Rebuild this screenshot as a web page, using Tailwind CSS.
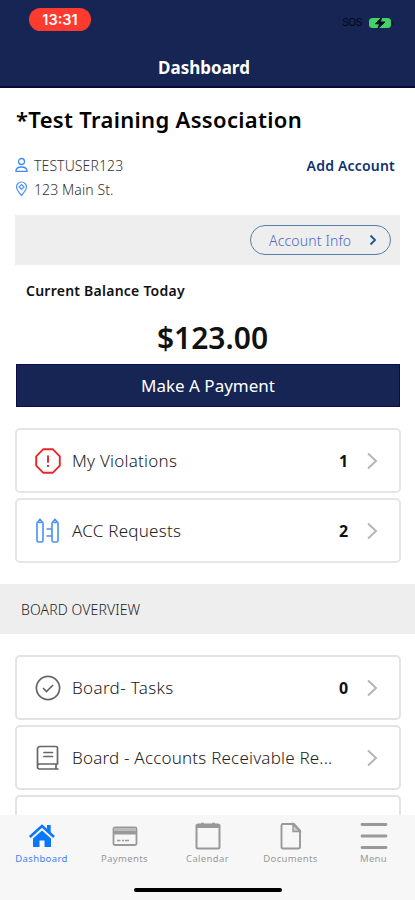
<!DOCTYPE html>
<html lang="en">
<head>
<meta charset="utf-8">
<meta name="viewport" content="width=device-width, initial-scale=1">
<title>Dashboard</title>
<script src="https://cdn.jsdelivr.net/npm/@tailwindcss/browser@4"></script>
</head>
<body class="bg-white">
<div class="relative flex h-[900px] w-[415px] flex-col overflow-hidden bg-white font-['Noto_Sans','Open_Sans',sans-serif] text-[#111]">
  <header class="flex h-[88px] shrink-0 flex-col border-b-2 border-[#07083f] bg-[#172554]">
    <div class="flex h-[45px] items-start justify-between pt-2 pr-[21px] pl-[29px]">
      <span class="flex h-[23px] w-[62px] items-center justify-center rounded-full bg-[#ff3b30] font-[Inter,sans-serif] text-[14.5px] font-semibold text-white">13:31</span>
      <div class="flex items-center gap-[6px] pt-[7px]">
        <span class="font-[Inter,sans-serif] text-[10.5px] leading-4 font-medium tracking-[-0.6px] text-[#060a20]">SOS</span>
        <svg width="26" height="12" viewBox="0 0 26 12"><rect x="1" y="1" width="22" height="10" rx="3.5" fill="#45d166"/><path d="M24 4v4c2-.5 2-3.500 0-4" fill="#0a1432"/><path d="M13.500 .5 7.500 6.800h4l-1.500 4.700 7-6.500h-4.500z" fill="#08102c" stroke="#08102c"/></svg>
      </div>
    </div>
    <h1 class="mt-[11px] text-center text-[17px] leading-6 font-bold text-white"><span class="mr-[7px]">Dashboard</span></h1>
  </header>

  <section class="flex flex-col px-[15px]">
    <h2 class="mt-[16px] pl-px whitespace-nowrap text-[22px] leading-[30px] font-semibold tracking-[0.32px] text-black">*Test Training Association</h2>
    <div class="mt-[19px] flex h-6 items-center justify-between pr-[5px]">
      <div class="flex items-center gap-[6px]">
        <svg width="13" height="16" viewBox="0 0 13 16" fill="none" stroke="#3f8cf5" stroke-width="1.300"><circle cx="6.500" cy="4.500" r="3"/><path d="M.9 14.300c0-3 2.200-4.300 5.600-4.300s5.600 1.300 5.600 4.300z"/></svg>
        <span class="text-[14px] font-light tracking-[0.1px] text-[#333]">TESTUSER123</span>
      </div>
      <a class="text-[14px] font-semibold tracking-[0.2px] text-[#0d3270]">Add Account</a>
    </div>
    <div class="flex h-6 items-center gap-[6px]">
      <svg width="13" height="16" viewBox="0 0 13 16" fill="none" stroke="#4e94f0" stroke-width="1.200"><path d="M6.500 14.500C3.500 11 1.500 8.500 1.500 6a5 5 0 0 1 10 0c0 2.500-2 5-5 8.500z"/><path d="m6.500 3.500 2.500 2.500-2.500 2.500L4 6z"/></svg>
      <span class="text-[14px] font-light tracking-[0.1px] text-[#333]">123 Main St.</span>
    </div>
    <div class="mt-[14px] flex h-[50px] items-center justify-end bg-[#eee] pr-[9px]">
      <button class="flex h-[30px] w-[141px] items-center justify-between rounded-full border border-[#5580aa] pr-[13px] pl-[18px] text-[14px] font-light tracking-[0.15px] text-[#4a6abf]">Account Info
        <svg width="8" height="12" viewBox="0 0 8 12" fill="none" stroke="#23598e" stroke-width="1.900"><path d="m1.500 1.500 4.500 4.500-4.500 4.500"/></svg>
      </button>
    </div>
    <h3 class="mt-4 pl-[11px] text-[14px] leading-5 font-semibold tracking-[0.24px]">Current Balance Today</h3>
    <p class="mt-[17px] pl-[10px] text-center text-[30px] leading-10 font-semibold">$123.00</p>
    <button class="mt-[6px] ml-px h-[43px] w-[384px] border border-[#0b0d4b] bg-[#172554] text-[17px] text-white">Make A Payment</button>
  </section>

  <section class="mt-[21px] flex flex-col gap-[5px] px-[15px]">
    <a class="flex h-[65px] w-[386px] items-center rounded-[5px] border-2 border-[#e6e6e6] pr-[21px] pl-[18px]">
      <svg class="mr-[11px]" width="26" height="26" viewBox="0 0 26 26" fill="none" stroke="#ee2428" stroke-width="1.900"><path d="M8.300 1.200h9.400l7.100 7.100v9.400l-7.100 7.100H8.300l-7.100-7.100V8.300z"/><path d="M13 7.500v7.200M13 17v2"/></svg>
      <span class="text-[17px] font-light tracking-[0.24px] text-[#222]">My Violations</span>
      <span class="ml-auto w-[11px] text-center text-[16px] font-bold">1</span>
      <svg class="ml-[17px]" width="12" height="18" viewBox="0 0 12 18" fill="none" stroke="#b5b5b5" stroke-width="2"><path d="m2 1.500 8 7.500-8 7.500"/></svg>
    </a>
    <a class="flex h-[65px] w-[386px] items-center rounded-[5px] border-2 border-[#e6e6e6] pt-px pr-[21px] pl-[18px]">
      <svg class="mr-[11px]" width="26" height="26" viewBox="0 0 26 26" fill="none" stroke="#4a90f4" stroke-width="1.600" stroke-linejoin="round"><path d="M2 22.500V5L5 1.300 8 5v17.500a1.500 1.500 0 0 1-1.500 1.500h-3A1.500 1.500 0 0 1 2 22.500zM17 22.500V5l3-3.700L23 5v17.500a1.500 1.500 0 0 1-1.500 1.500h-3a1.500 1.500 0 0 1-1.500-1.500zM3.500 4.500h3M18.500 4.500h3M11.500 11H17M11.500 18H17"/></svg>
      <span class="text-[17px] font-light tracking-[0.24px] text-[#222]">ACC Requests</span>
      <span class="ml-auto w-[11px] text-center text-[16px] font-bold">2</span>
      <svg class="ml-[17px]" width="12" height="18" viewBox="0 0 12 18" fill="none" stroke="#b5b5b5" stroke-width="2"><path d="m2 1.500 8 7.500-8 7.500"/></svg>
    </a>
  </section>

  <h3 class="mt-[21px] flex h-[50px] shrink-0 items-center bg-[#eee] pl-[21px] text-[14px] font-light tracking-[0.12px] text-[#222]">BOARD OVERVIEW</h3>

  <section class="mt-[21px] flex flex-col gap-[5px] px-[15px]">
    <a class="flex h-[65px] w-[386px] items-center rounded-[5px] border-2 border-[#e3e3e3] pr-[21px] pl-[18px]">
      <svg class="mr-[11px]" width="26" height="26" viewBox="0 0 26 26" fill="none" stroke="#666" stroke-width="1.700"><circle cx="13" cy="13" r="11.600"/><path d="m8 13 3.500 3.500 6.500-6.500"/></svg>
      <span class="text-[17px] font-light tracking-[0.34px] text-[#222]">Board- Tasks</span>
      <span class="ml-auto w-[11px] text-center text-[16px] font-bold">0</span>
      <svg class="ml-[17px]" width="12" height="18" viewBox="0 0 12 18" fill="none" stroke="#b5b5b5" stroke-width="2"><path d="m2 1.500 8 7.500-8 7.500"/></svg>
    </a>
    <a class="flex h-[65px] w-[386px] items-center rounded-[5px] border-2 border-[#e3e3e3] pr-[21px] pl-[18px]">
      <svg class="mr-[11px]" width="26" height="26" viewBox="0 0 26 26" fill="none" stroke="#666" stroke-width="1.700" stroke-linecap="round" stroke-linejoin="round"><path d="M22.500 19V3A1.500 1.500 0 0 0 21 1.500H5A2.500 2.500 0 0 0 2.500 4v17.500A2 2 0 0 0 4.500 24H23M2.500 21a2 2 0 0 1 2-2h18M21 19v5M9 7.500h8.500M9 11.500h8.500"/></svg>
      <span class="text-[17px] font-light tracking-[0.2px] whitespace-nowrap text-[#222]">Board - Accounts Receivable Re...</span>
      <svg class="ml-auto" width="12" height="18" viewBox="0 0 12 18" fill="none" stroke="#b5b5b5" stroke-width="2"><path d="m2 1.500 8 7.500-8 7.500"/></svg>
    </a>
    <a class="h-[65px] w-[386px] rounded-[5px] border-2 border-[#e3e3e3]"></a>
  </section>

  <nav class="absolute inset-x-0 bottom-0 flex h-[85px] flex-col bg-[#f7f7f7] text-[9.5px] leading-3 tracking-[0.35px] text-[#999]">
    <div class="grid grid-cols-5">
      <a class="flex flex-col items-center pt-[7px] text-[#3b82f6]">
        <svg width="28" height="28" viewBox="0 0 28 28"><path d="M1.800 15 14 4l12 11" fill="none" stroke="#0b78fb" stroke-width="2.600"/><path d="M19 3h3.700v9L19 8.500z" fill="#0b78fb"/><path d="M5 16.500 14 8.500l9 8V25h-6.500v-6.500h-5V25H5z" fill="#0b78fb"/></svg>
        <span class="mt-[3px]">Dashboard</span>
      </a>
      <a class="flex flex-col items-center pt-[7px]">
        <svg width="28" height="28" viewBox="0 0 28 28"><rect x="2.500" y="5.500" width="23" height="17.500" rx="1.500" fill="none" stroke="#999" stroke-width="1.800"/><path d="M3 6h22v3H3z" fill="#bbb"/><path d="M3 9h22v3.500H3z" fill="#999"/><path d="M6 18.500h3.500M11 18.500h2M14 18.500h4" stroke="#999" stroke-width="1.700"/></svg>
        <span class="mt-[3px]">Payments</span>
      </a>
      <a class="flex flex-col items-center pt-[7px]">
        <svg width="28" height="28" viewBox="0 0 28 28"><rect x="2.500" y="2.500" width="23" height="24" rx="1.500" fill="none" stroke="#999" stroke-width="2"/><path d="M2.500 2.500h23v3.500h-23zM7 .8h3v2H7zM18 .8h3v2h-3z" fill="#999"/></svg>
        <span class="mt-[3px]">Calendar</span>
      </a>
      <a class="flex flex-col items-center pt-[7px]">
        <svg width="28" height="28" viewBox="0 0 28 28"><path d="M6 2H17l6 6.500v16.500a1.500 1.500 0 0 1-1.500 1.500H6A1.500 1.500 0 0 1 4.500 25V3.500A1.500 1.500 0 0 1 6 2z" fill="none" stroke="#999" stroke-width="1.900"/><path d="M16 2v7.500h7z" fill="#ccc" stroke="#999" stroke-width="1.500"/></svg>
        <span class="mt-[3px]">Documents</span>
      </a>
      <a class="flex flex-col items-center pt-[7px]">
        <svg width="28" height="28" viewBox="0 0 28 28" stroke="#999" stroke-width="2.800" stroke-linecap="round"><path d="M2 2.500h24M2 14h24M2 25.500h24"/></svg>
        <span class="mt-[3px]">Menu</span>
      </a>
    </div>
    <div class="mx-auto mt-[23px] h-1 w-[148px] rounded-full bg-black"></div>
  </nav>
</div>
</body>
</html>
